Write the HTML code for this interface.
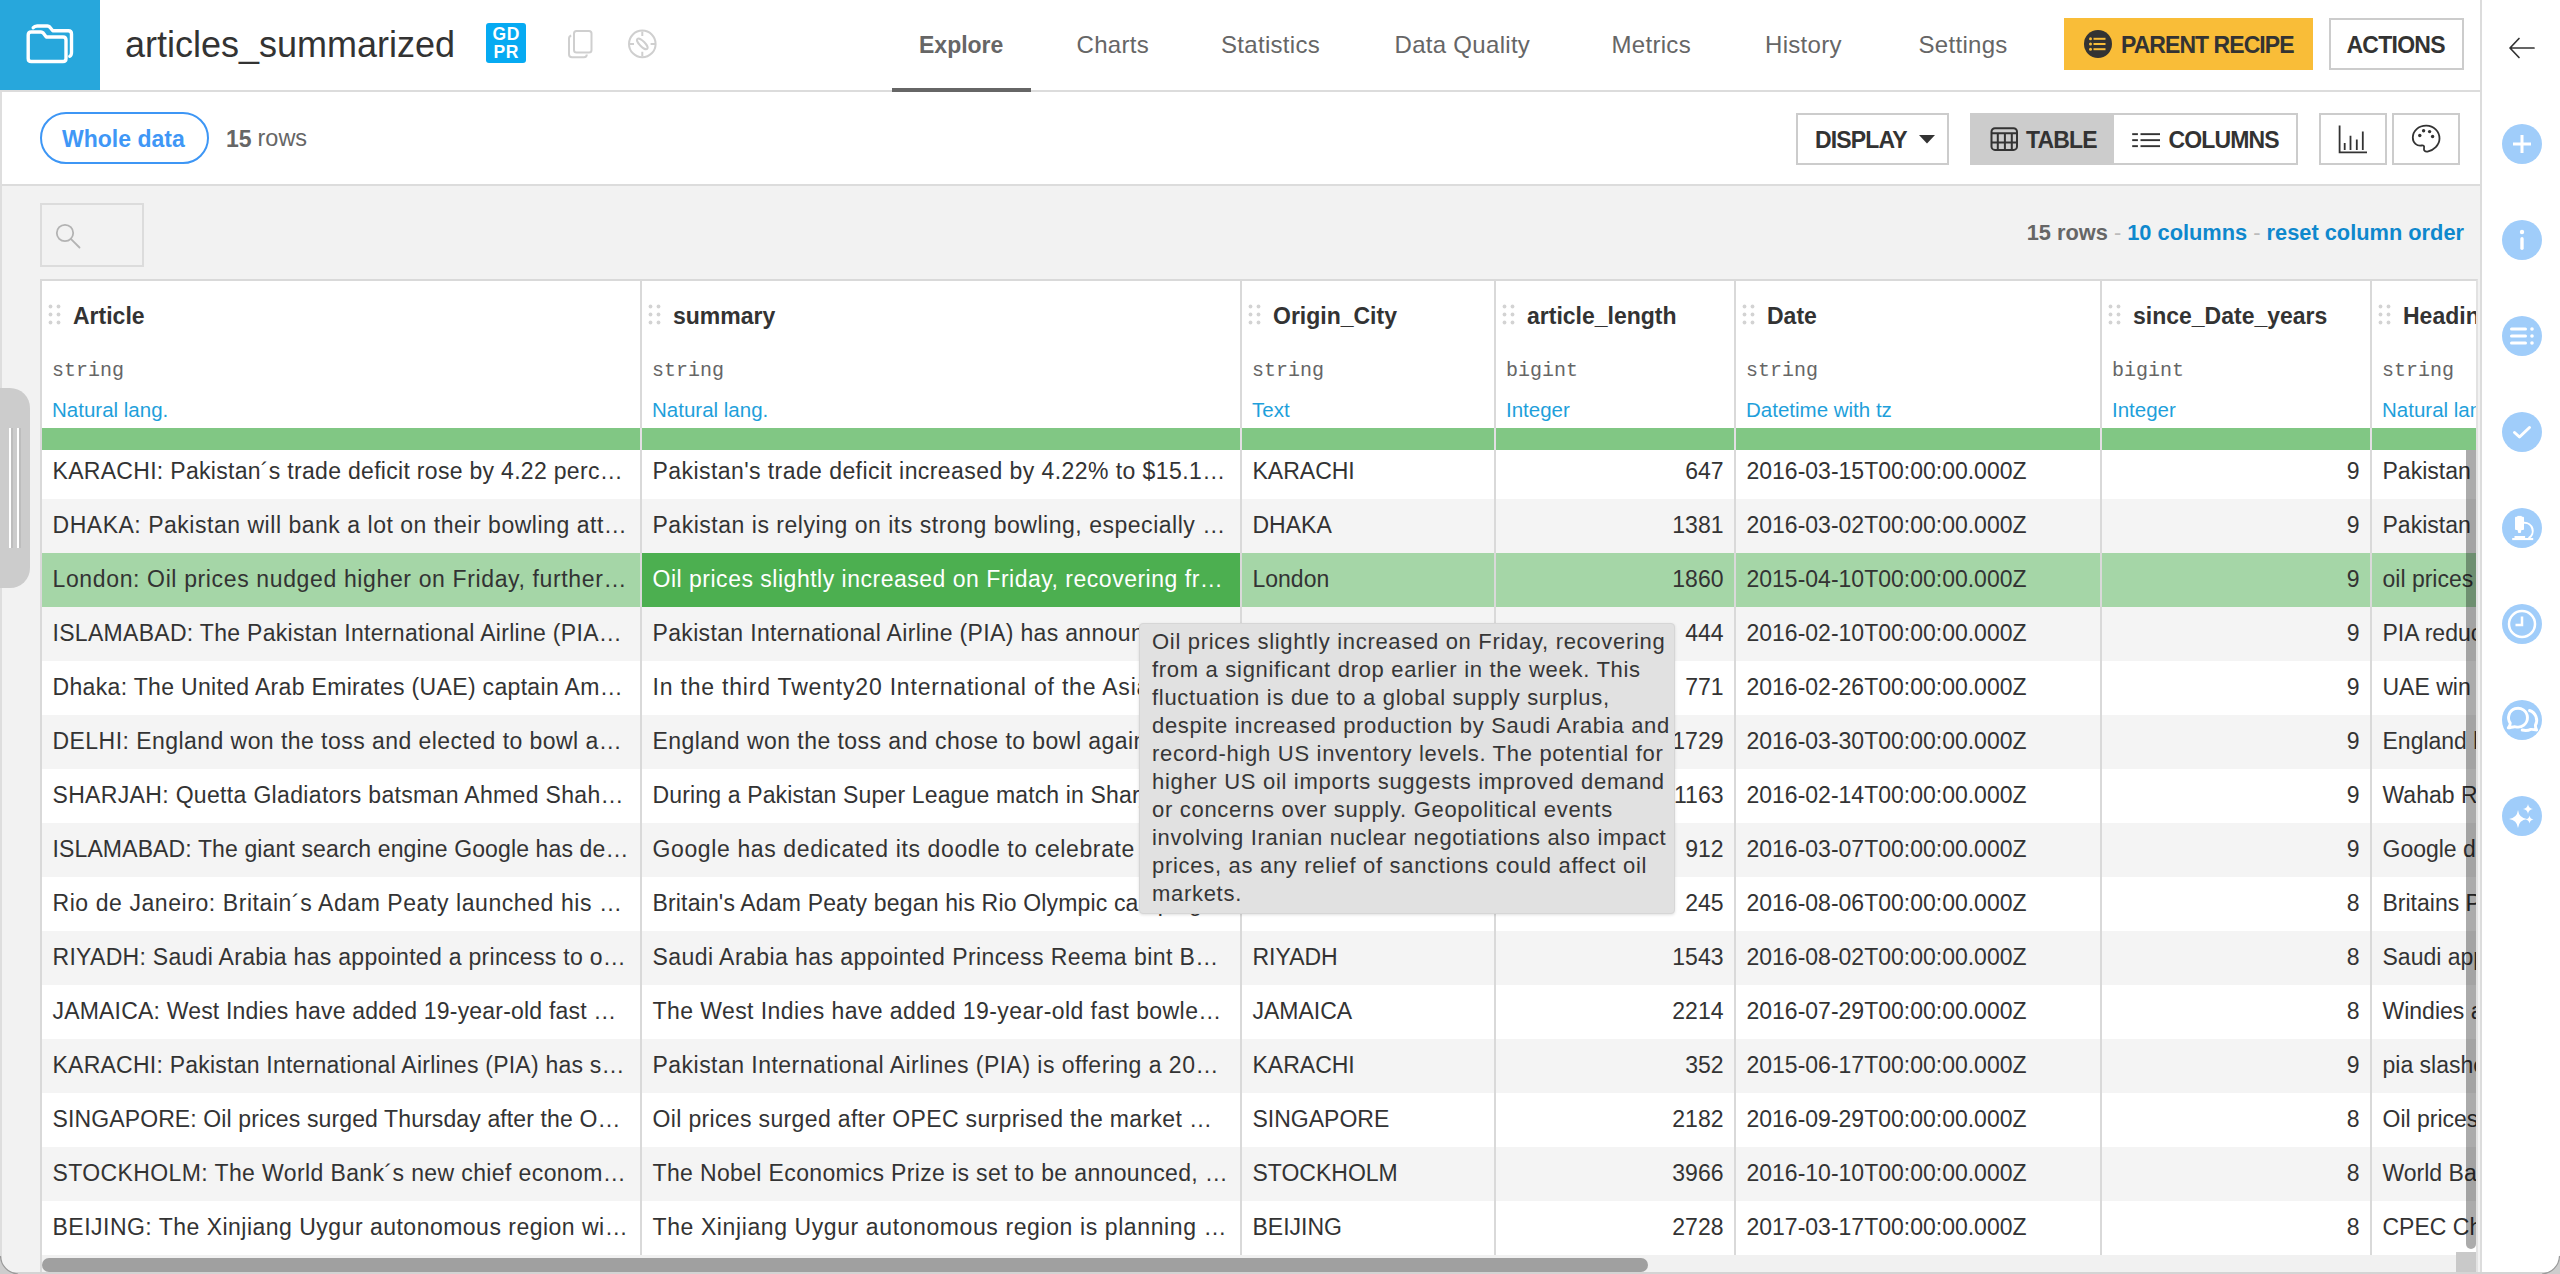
<!DOCTYPE html>
<html><head><meta charset="utf-8"><title>articles_summarized</title>
<style>
*{box-sizing:border-box;margin:0;padding:0}
html,body{width:2560px;height:1274px;overflow:hidden;background:#fff}
body{position:relative;font-family:"Liberation Sans",sans-serif;color:#333}
.t{position:absolute;white-space:nowrap}
.abs{position:absolute}
.btn{position:absolute;border:2px solid #cccccc;background:#fff}
.mono{font-family:"Liberation Mono",monospace}
</style></head><body>
<div class="abs" style="left:0;top:0;width:100px;height:90px;background:#27a7dc"></div>
<svg class="abs" style="left:0;top:0" width="100" height="90" viewBox="0 0 100 90" fill="none" stroke="#fff" stroke-width="3.4" stroke-linejoin="round" stroke-linecap="round">
<path d="M33.2 27.8 Q34.5 26 37.2 26 H47.5 Q48.8 26 49.7 27 L52.8 30.8 H68.3 Q71.5 30.8 71.5 34 V52.3 Q71.5 55.6 69.8 56.3"/>
<path d="M28.2 35 Q28.2 32 31.2 32 H41 Q42.3 32 43.2 33 L46.3 37 H63 Q66 37 66 40 V58.5 Q66 61.5 63 61.5 H31.2 Q28.2 61.5 28.2 58.5 Z"/>
</svg>
<div class="t" style="top:26.53px;font-size:36px;line-height:36px;font-weight:400;color:#333;left:125px;">articles_summarized</div>
<div class="abs" style="left:486px;top:23px;width:40px;height:40px;background:#06aaf2;border-radius:3px"></div>
<div class="t" style="left:486px;width:40px;text-align:center;top:26.49px;font-size:17.5px;line-height:17.5px;font-weight:700;color:#fff;letter-spacing:0.6px;text-indent:0.6px">GD</div>
<div class="t" style="left:486px;width:40px;text-align:center;top:43.99px;font-size:17.5px;line-height:17.5px;font-weight:700;color:#fff;letter-spacing:0.6px;text-indent:0.6px">PR</div>
<svg class="abs" style="left:560px;top:24px" width="40" height="40" viewBox="0 0 40 40" fill="none" stroke="#cfcfcf" stroke-width="2">
<rect x="14" y="7" width="17.5" height="21.5" rx="2.5"/>
<path d="M11.2 11.5 Q9 12.3 9 14.8 V30.3 Q9 33.2 12 33.2 H24 Q26.8 33.2 26.8 30.5"/>
</svg>
<svg class="abs" style="left:622px;top:24px" width="40" height="40" viewBox="0 0 40 40" fill="none" stroke="#cfcfcf" stroke-width="2">
<circle cx="20.3" cy="19.9" r="13.3"/>
<path d="M20.3 7.5 V12 M20.3 27.8 V32.3 M7.6 19.9 H12 M28.6 19.9 H33"/>
<ellipse cx="20.3" cy="19.9" rx="7" ry="2.6" transform="rotate(45 20.3 19.9)"/>
</svg>
<div class="t" style="top:33.53px;font-size:23px;line-height:23px;font-weight:700;color:#666;left:919px;">Explore</div>
<div class="t" style="top:32.68px;font-size:24px;line-height:24px;font-weight:400;color:#666;left:1076.5px;letter-spacing:0.3px;">Charts</div>
<div class="t" style="top:32.68px;font-size:24px;line-height:24px;font-weight:400;color:#666;left:1221px;letter-spacing:0.3px;">Statistics</div>
<div class="t" style="top:32.68px;font-size:24px;line-height:24px;font-weight:400;color:#666;left:1394.5px;letter-spacing:0.3px;">Data Quality</div>
<div class="t" style="top:32.68px;font-size:24px;line-height:24px;font-weight:400;color:#666;left:1611.5px;letter-spacing:0.3px;">Metrics</div>
<div class="t" style="top:32.68px;font-size:24px;line-height:24px;font-weight:400;color:#666;left:1765px;letter-spacing:0.3px;">History</div>
<div class="t" style="top:32.68px;font-size:24px;line-height:24px;font-weight:400;color:#666;left:1918.5px;letter-spacing:0.3px;">Settings</div>
<div class="abs" style="left:2064px;top:18px;width:249px;height:52px;background:#f9bd38"></div>
<svg class="abs" style="left:2084px;top:30px" width="28" height="28" viewBox="0 0 28 28">
<circle cx="14" cy="14" r="14" fill="#333"/>
<g fill="#f9bd38"><circle cx="6.5" cy="8.8" r="1.5"/><circle cx="6.5" cy="14" r="1.5"/><circle cx="6.5" cy="19.2" r="1.5"/>
<rect x="9.5" y="7.8" width="12" height="2"/><rect x="9.5" y="13" width="12" height="2"/><rect x="9.5" y="18.2" width="12" height="2"/></g>
</svg>
<div class="t" style="top:33.73px;font-size:23px;line-height:23px;font-weight:700;color:#333;left:2121px;letter-spacing:-0.95px;">PARENT RECIPE</div>
<div class="btn" style="left:2329px;top:18px;width:135px;height:52px"></div>
<div class="t" style="top:34.13px;font-size:23px;line-height:23px;font-weight:700;color:#333;left:2346.5px;letter-spacing:-0.75px;">ACTIONS</div>
<div class="abs" style="left:0;top:90px;width:2480px;height:2px;background:#dcdcdc"></div>
<div class="abs" style="left:892px;top:88px;width:139px;height:4px;background:#666"></div>
<div class="abs" style="left:0;top:184px;width:2480px;height:2px;background:#dcdcdc"></div>
<div class="abs" style="left:40px;top:112px;width:169px;height:52px;border:2px solid #3d96f5;border-radius:26px"></div>
<div class="t" style="top:127.53px;font-size:23px;line-height:23px;font-weight:700;color:#3f97f6;left:62px;">Whole data</div>
<div class="t" style="top:127.53px;font-size:23px;line-height:23px;font-weight:700;color:#666;left:226px;">15</div>
<div class="t" style="top:127.11px;font-size:23.5px;line-height:23.5px;font-weight:400;color:#666;left:257.5px;">rows</div>
<div class="btn" style="left:1796px;top:113px;width:153px;height:52px"></div>
<div class="t" style="top:129.13px;font-size:23px;line-height:23px;font-weight:700;color:#333;left:1815px;letter-spacing:-0.85px;">DISPLAY</div>
<svg class="abs" style="left:1918px;top:134px" width="18" height="10" viewBox="0 0 18 10"><path d="M1 1 H17 L9 9.5 Z" fill="#333"/></svg>
<div class="btn" style="left:1970px;top:113px;width:328px;height:52px"></div>
<div class="abs" style="left:1970px;top:113px;width:144px;height:52px;background:#cccccc"></div>
<svg class="abs" style="left:1988px;top:125px" width="32" height="28" viewBox="0 0 32 28" fill="none" stroke="#333" stroke-width="2">
<rect x="3.5" y="3.3" width="25.5" height="21.6" rx="3.5"/>
<path d="M3.5 8.3 H29 M3.5 17.6 H29 M9.8 8.3 V25 M16.9 8.3 V25 M23.8 8.3 V25"/>
</svg>
<div class="t" style="top:129.13px;font-size:23px;line-height:23px;font-weight:700;color:#333;left:2026px;letter-spacing:-0.85px;">TABLE</div>
<svg class="abs" style="left:2130px;top:130px" width="32" height="20" viewBox="0 0 32 20" fill="#333">
<rect x="2.2" y="3.2" width="5.7" height="1.9"/><rect x="10.5" y="3.2" width="19.5" height="1.9"/>
<rect x="2.2" y="9.2" width="5.7" height="1.9"/><rect x="10.5" y="9.2" width="19.5" height="1.9"/>
<rect x="2.2" y="15.2" width="5.7" height="1.9"/><rect x="10.5" y="15.2" width="19.5" height="1.9"/>
</svg>
<div class="t" style="top:129.13px;font-size:23px;line-height:23px;font-weight:700;color:#333;left:2168.5px;letter-spacing:-0.85px;">COLUMNS</div>
<div class="btn" style="left:2319px;top:113px;width:68px;height:52px"></div>
<svg class="abs" style="left:2319px;top:113px" width="68" height="52" viewBox="0 0 68 52" fill="none" stroke="#333" stroke-width="1.8">
<path d="M20.6 12.5 V39.3 H48"/>
<path d="M25.7 30 V37 M31.5 22.8 V37 M37.8 26.4 V37 M43.8 18.5 V37"/>
</svg>
<div class="btn" style="left:2392px;top:113px;width:68px;height:52px"></div>
<svg class="abs" style="left:2392px;top:113px" width="68" height="52" viewBox="0 0 68 52" fill="none" stroke="#333" stroke-width="1.8">
<path d="M34.5 12.6 C26.5 12.4 20.8 18 20.8 24.6 C20.8 30 25 33.3 29.5 32.5 C31.6 32.1 32.5 33.2 32 35.3 C31.6 37.5 33 39 35.5 38.6 C41.5 37.5 47.5 32 47.5 25.5 C47.5 18.5 41.5 12.7 34.5 12.6 Z"/>
<g fill="#333" stroke="none"><circle cx="27.8" cy="22.5" r="1.7"/><circle cx="31.6" cy="17.8" r="1.7"/><circle cx="37.6" cy="18.6" r="1.7"/><circle cx="40.6" cy="23.5" r="1.7"/></g>
</svg>
<div class="abs" style="left:2480px;top:0;width:2px;height:1274px;background:#dcdcdc"></div>
<svg class="abs" style="left:2506px;top:32px" width="32" height="32" viewBox="0 0 32 32" fill="none" stroke="#333" stroke-width="1.7" stroke-linecap="round" stroke-linejoin="round"><path d="M4.5 16 H28 M13 6.5 L4 16 L13 25.5"/></svg>
<svg class="abs" style="left:2502px;top:124px" width="40" height="40" viewBox="0 0 40 40"><circle cx="20" cy="20" r="20" fill="#a0cdfa"/><path d="M20 11 V29 M11 20 H29" stroke="#fff" stroke-width="3"/></svg>
<svg class="abs" style="left:2502px;top:220px" width="40" height="40" viewBox="0 0 40 40"><circle cx="20" cy="20" r="20" fill="#a0cdfa"/><rect x="18.3" y="17" width="3.4" height="13" rx="1.7" fill="#fff"/><circle cx="20" cy="12" r="2.2" fill="#fff"/></svg>
<svg class="abs" style="left:2502px;top:316px" width="40" height="40" viewBox="0 0 40 40"><circle cx="20" cy="20" r="20" fill="#a0cdfa"/><g fill="#fff"><rect x="8" y="11.5" width="17" height="3" rx="1.5"/><rect x="8" y="18.5" width="17" height="3" rx="1.5"/><rect x="8" y="25.5" width="17" height="3" rx="1.5"/><circle cx="30" cy="13" r="1.8"/><circle cx="30" cy="20" r="1.8"/><circle cx="30" cy="27" r="1.8"/></g></svg>
<svg class="abs" style="left:2502px;top:412px" width="40" height="40" viewBox="0 0 40 40"><circle cx="20" cy="20" r="20" fill="#a0cdfa"/><path d="M12.5 20.5 L17.5 25 L27.5 15.5" stroke="#fff" stroke-width="3" fill="none" stroke-linecap="round" stroke-linejoin="round"/></svg>
<svg class="abs" style="left:2502px;top:508px" width="40" height="40" viewBox="0 0 40 40"><circle cx="20" cy="20" r="20" fill="#a0cdfa"/><g fill="#fff"><rect x="13" y="8.8" width="9" height="13.2" rx="1"/><rect x="15.3" y="7.9" width="4.4" height="2"/><path d="M15.4 21.5 L16.3 25 H18.7 L19.6 21.5 Z"/><rect x="10.2" y="30" width="21" height="2.1"/><rect x="12.5" y="28" width="10.6" height="2.5"/></g><path d="M22 14.8 A8.2 8.2 0 0 1 26.6 30.1" stroke="#fff" stroke-width="2.1" fill="none"/></svg>
<svg class="abs" style="left:2502px;top:604px" width="40" height="40" viewBox="0 0 40 40"><circle cx="20" cy="20" r="20" fill="#a0cdfa"/><circle cx="20" cy="20" r="13" stroke="#fff" stroke-width="2.5" fill="none"/><path d="M20 12.5 V21 H13.5" stroke="#fff" stroke-width="2.5" fill="none"/></svg>
<svg class="abs" style="left:2502px;top:700px" width="40" height="40" viewBox="0 0 40 40"><circle cx="20" cy="20" r="20" fill="#a0cdfa"/><path d="M8.26 23.1 A9.45 9.45 0 1 1 13.55 26.8 C11.5 26.3 9 27.6 6.3 27.9 C7.6 26.2 8.3 24.6 8.26 23.1 Z" stroke="#fff" stroke-width="2.9" fill="none" stroke-linejoin="round"/><path d="M27.5 10.5 A10.3 10.3 0 0 1 33.4 25.3 C33.3 26.9 34 28.6 34.6 30 C32.4 30 30.5 29.1 28.8 29.4 C26 30.6 23 30.7 20.2 30" stroke="#fff" stroke-width="2.9" fill="none" stroke-linejoin="round" stroke-linecap="round"/></svg>
<svg class="abs" style="left:2502px;top:796px" width="40" height="40" viewBox="0 0 40 40"><circle cx="20" cy="20" r="20" fill="#a0cdfa"/><g fill="#fff"><path d="M16 14 Q17 22 25 23 Q17 24 16 32 Q15 24 7 23 Q15 22 16 14 Z"/><path d="M26 8 Q26.6 12.4 31 13 Q26.6 13.6 26 18 Q25.4 13.6 21 13 Q25.4 12.4 26 8 Z"/><path d="M27.5 19.5 Q28 23 31.5 23.5 Q28 24 27.5 27.5 Q27 24 23.5 23.5 Q27 23 27.5 19.5 Z"/></g></svg>
<div class="abs" style="left:0;top:92px;width:2px;height:1182px;background:#dedede"></div>
<div class="abs" style="left:2px;top:186px;width:2478px;height:1086px;background:#f2f2f2"></div>
<div class="abs" style="left:40px;top:203px;width:104px;height:64px;border:2px solid #dcdcdc"></div>
<svg class="abs" style="left:50px;top:218px" width="36" height="36" viewBox="0 0 36 36" fill="none" stroke="#b3b3b3" stroke-width="1.8" stroke-linecap="round"><circle cx="15" cy="15" r="8.2"/><path d="M20.8 20.8 L29.5 29.5"/></svg>
<div class="t" style="right:96px;top:222.35px;font-size:21.8px;line-height:21.8px;font-weight:700;color:#666">15 rows <span style="color:#bbb;font-weight:400">-</span> <span style="color:#0f88cd">10 columns</span> <span style="color:#bbb;font-weight:400">-</span> <span style="color:#0f88cd">reset column order</span></div>
<div class="abs" style="left:0;top:388px;width:30px;height:200px;background:#cccccc;border-radius:0 20px 20px 0"></div>
<div class="abs" style="left:9px;top:428px;width:2px;height:120px;background:#fff"></div>
<div class="abs" style="left:11px;top:428px;width:2px;height:120px;background:#bdbdbd"></div>
<div class="abs" style="left:17px;top:428px;width:2px;height:120px;background:#fff"></div>
<div class="abs" style="left:19px;top:428px;width:2px;height:120px;background:#bdbdbd"></div>
<div class="abs" style="left:40px;top:279px;width:2438px;height:993px;background:#fff;border-top:2px solid #d9d9d9;border-left:2px solid #d9d9d9;border-right:2px solid #e2e2e2;overflow:hidden">
<div style="position:absolute;left:-42px;top:-281px;width:2560px;height:1274px">
<div class="abs" style="left:42px;top:445px;width:2440px;height:54px;background:#fff"></div>
<div class="abs" style="left:42px;top:499px;width:2440px;height:54px;background:#f4f4f4"></div>
<div class="abs" style="left:42px;top:553px;width:2440px;height:54px;background:#a5d6a7"></div>
<div class="abs" style="left:42px;top:607px;width:2440px;height:54px;background:#f4f4f4"></div>
<div class="abs" style="left:42px;top:661px;width:2440px;height:54px;background:#fff"></div>
<div class="abs" style="left:42px;top:715px;width:2440px;height:54px;background:#f4f4f4"></div>
<div class="abs" style="left:42px;top:769px;width:2440px;height:54px;background:#fff"></div>
<div class="abs" style="left:42px;top:823px;width:2440px;height:54px;background:#f4f4f4"></div>
<div class="abs" style="left:42px;top:877px;width:2440px;height:54px;background:#fff"></div>
<div class="abs" style="left:42px;top:931px;width:2440px;height:54px;background:#f4f4f4"></div>
<div class="abs" style="left:42px;top:985px;width:2440px;height:54px;background:#fff"></div>
<div class="abs" style="left:42px;top:1039px;width:2440px;height:54px;background:#f4f4f4"></div>
<div class="abs" style="left:42px;top:1093px;width:2440px;height:54px;background:#fff"></div>
<div class="abs" style="left:42px;top:1147px;width:2440px;height:54px;background:#f4f4f4"></div>
<div class="abs" style="left:42px;top:1201px;width:2440px;height:54px;background:#fff"></div>
<div class="abs" style="left:642px;top:553px;width:598px;height:54px;background:#4caf50"></div>
<div class="t" style="left:52.5px;top:459.93px;font-size:23px;line-height:23px;letter-spacing:0.302px;color:#333">KARACHI: Pakistan´s trade deficit rose by 4.22 perc…</div>
<div class="t" style="left:652.5px;top:459.93px;font-size:23px;line-height:23px;letter-spacing:0.432px;color:#333">Pakistan&#x27;s trade deficit increased by 4.22% to $15.1…</div>
<div class="t" style="left:1252.5px;top:459.93px;font-size:23px;line-height:23px;color:#333">KARACHI</div>
<div class="t" style="left:1496px;width:227.5px;text-align:right;top:459.93px;font-size:23px;line-height:23px;color:#333">647</div>
<div class="t" style="left:1746.5px;top:459.93px;font-size:23px;line-height:23px;color:#333">2016-03-15T00:00:00.000Z</div>
<div class="t" style="left:2102px;width:257.5px;text-align:right;top:459.93px;font-size:23px;line-height:23px;color:#333">9</div>
<div class="t" style="left:2382.5px;top:459.93px;font-size:23px;line-height:23px;color:#333">Pakistan trade</div>
<div class="t" style="left:52.5px;top:513.93px;font-size:23px;line-height:23px;letter-spacing:0.522px;color:#333">DHAKA: Pakistan will bank a lot on their bowling att…</div>
<div class="t" style="left:652.5px;top:513.93px;font-size:23px;line-height:23px;letter-spacing:0.522px;color:#333">Pakistan is relying on its strong bowling, especially …</div>
<div class="t" style="left:1252.5px;top:513.93px;font-size:23px;line-height:23px;color:#333">DHAKA</div>
<div class="t" style="left:1496px;width:227.5px;text-align:right;top:513.93px;font-size:23px;line-height:23px;color:#333">1381</div>
<div class="t" style="left:1746.5px;top:513.93px;font-size:23px;line-height:23px;color:#333">2016-03-02T00:00:00.000Z</div>
<div class="t" style="left:2102px;width:257.5px;text-align:right;top:513.93px;font-size:23px;line-height:23px;color:#333">9</div>
<div class="t" style="left:2382.5px;top:513.93px;font-size:23px;line-height:23px;color:#333">Pakistan will</div>
<div class="t" style="left:52.5px;top:567.93px;font-size:23px;line-height:23px;letter-spacing:0.634px;color:#333">London: Oil prices nudged higher on Friday, further…</div>
<div class="t" style="left:652.5px;top:567.93px;font-size:23px;line-height:23px;letter-spacing:0.509px;color:#fff">Oil prices slightly increased on Friday, recovering fr…</div>
<div class="t" style="left:1252.5px;top:567.93px;font-size:23px;line-height:23px;color:#333">London</div>
<div class="t" style="left:1496px;width:227.5px;text-align:right;top:567.93px;font-size:23px;line-height:23px;color:#333">1860</div>
<div class="t" style="left:1746.5px;top:567.93px;font-size:23px;line-height:23px;color:#333">2015-04-10T00:00:00.000Z</div>
<div class="t" style="left:2102px;width:257.5px;text-align:right;top:567.93px;font-size:23px;line-height:23px;color:#333">9</div>
<div class="t" style="left:2382.5px;top:567.93px;font-size:23px;line-height:23px;color:#333">oil prices</div>
<div class="t" style="left:52.5px;top:621.93px;font-size:23px;line-height:23px;letter-spacing:0.298px;color:#333">ISLAMABAD: The Pakistan International Airline (PIA…</div>
<div class="t" style="left:652.5px;top:621.93px;font-size:23px;line-height:23px;letter-spacing:0.338px;color:#333">Pakistan International Airline (PIA) has announced a…</div>
<div class="t" style="left:1252.5px;top:621.93px;font-size:23px;line-height:23px;color:#333">ISLAMABAD</div>
<div class="t" style="left:1496px;width:227.5px;text-align:right;top:621.93px;font-size:23px;line-height:23px;color:#333">444</div>
<div class="t" style="left:1746.5px;top:621.93px;font-size:23px;line-height:23px;color:#333">2016-02-10T00:00:00.000Z</div>
<div class="t" style="left:2102px;width:257.5px;text-align:right;top:621.93px;font-size:23px;line-height:23px;color:#333">9</div>
<div class="t" style="left:2382.5px;top:621.93px;font-size:23px;line-height:23px;color:#333">PIA reduces</div>
<div class="t" style="left:52.5px;top:675.93px;font-size:23px;line-height:23px;letter-spacing:0.329px;color:#333">Dhaka: The United Arab Emirates (UAE) captain Am…</div>
<div class="t" style="left:652.5px;top:675.93px;font-size:23px;line-height:23px;letter-spacing:0.804px;color:#333">In the third Twenty20 International of the Asia Cup…</div>
<div class="t" style="left:1252.5px;top:675.93px;font-size:23px;line-height:23px;color:#333">DHAKA</div>
<div class="t" style="left:1496px;width:227.5px;text-align:right;top:675.93px;font-size:23px;line-height:23px;color:#333">771</div>
<div class="t" style="left:1746.5px;top:675.93px;font-size:23px;line-height:23px;color:#333">2016-02-26T00:00:00.000Z</div>
<div class="t" style="left:2102px;width:257.5px;text-align:right;top:675.93px;font-size:23px;line-height:23px;color:#333">9</div>
<div class="t" style="left:2382.5px;top:675.93px;font-size:23px;line-height:23px;color:#333">UAE win</div>
<div class="t" style="left:52.5px;top:729.93px;font-size:23px;line-height:23px;letter-spacing:0.450px;color:#333">DELHI: England won the toss and elected to bowl a…</div>
<div class="t" style="left:652.5px;top:729.93px;font-size:23px;line-height:23px;letter-spacing:0.454px;color:#333">England won the toss and chose to bowl against Sri…</div>
<div class="t" style="left:1252.5px;top:729.93px;font-size:23px;line-height:23px;color:#333">DELHI</div>
<div class="t" style="left:1496px;width:227.5px;text-align:right;top:729.93px;font-size:23px;line-height:23px;color:#333">1729</div>
<div class="t" style="left:1746.5px;top:729.93px;font-size:23px;line-height:23px;color:#333">2016-03-30T00:00:00.000Z</div>
<div class="t" style="left:2102px;width:257.5px;text-align:right;top:729.93px;font-size:23px;line-height:23px;color:#333">9</div>
<div class="t" style="left:2382.5px;top:729.93px;font-size:23px;line-height:23px;color:#333">England beat</div>
<div class="t" style="left:52.5px;top:783.93px;font-size:23px;line-height:23px;letter-spacing:0.333px;color:#333">SHARJAH: Quetta Gladiators batsman Ahmed Shah…</div>
<div class="t" style="left:652.5px;top:783.93px;font-size:23px;line-height:23px;letter-spacing:0.148px;color:#333">During a Pakistan Super League match in Sharjah, Q…</div>
<div class="t" style="left:1252.5px;top:783.93px;font-size:23px;line-height:23px;color:#333">SHARJAH</div>
<div class="t" style="left:1496px;width:227.5px;text-align:right;top:783.93px;font-size:23px;line-height:23px;color:#333">1163</div>
<div class="t" style="left:1746.5px;top:783.93px;font-size:23px;line-height:23px;color:#333">2016-02-14T00:00:00.000Z</div>
<div class="t" style="left:2102px;width:257.5px;text-align:right;top:783.93px;font-size:23px;line-height:23px;color:#333">9</div>
<div class="t" style="left:2382.5px;top:783.93px;font-size:23px;line-height:23px;color:#333">Wahab Riaz</div>
<div class="t" style="left:52.5px;top:837.93px;font-size:23px;line-height:23px;letter-spacing:0.127px;color:#333">ISLAMABAD: The giant search engine Google has de…</div>
<div class="t" style="left:652.5px;top:837.93px;font-size:23px;line-height:23px;letter-spacing:0.620px;color:#333">Google has dedicated its doodle to celebrate the bi…</div>
<div class="t" style="left:1252.5px;top:837.93px;font-size:23px;line-height:23px;color:#333">ISLAMABAD</div>
<div class="t" style="left:1496px;width:227.5px;text-align:right;top:837.93px;font-size:23px;line-height:23px;color:#333">912</div>
<div class="t" style="left:1746.5px;top:837.93px;font-size:23px;line-height:23px;color:#333">2016-03-07T00:00:00.000Z</div>
<div class="t" style="left:2102px;width:257.5px;text-align:right;top:837.93px;font-size:23px;line-height:23px;color:#333">9</div>
<div class="t" style="left:2382.5px;top:837.93px;font-size:23px;line-height:23px;color:#333">Google doodle</div>
<div class="t" style="left:52.5px;top:891.93px;font-size:23px;line-height:23px;letter-spacing:0.574px;color:#333">Rio de Janeiro: Britain´s Adam Peaty launched his …</div>
<div class="t" style="left:652.5px;top:891.93px;font-size:23px;line-height:23px;letter-spacing:0.164px;color:#333">Britain&#x27;s Adam Peaty began his Rio Olympic campaig…</div>
<div class="t" style="left:1252.5px;top:891.93px;font-size:23px;line-height:23px;color:#333">Rio de Janeiro</div>
<div class="t" style="left:1496px;width:227.5px;text-align:right;top:891.93px;font-size:23px;line-height:23px;color:#333">245</div>
<div class="t" style="left:1746.5px;top:891.93px;font-size:23px;line-height:23px;color:#333">2016-08-06T00:00:00.000Z</div>
<div class="t" style="left:2102px;width:257.5px;text-align:right;top:891.93px;font-size:23px;line-height:23px;color:#333">8</div>
<div class="t" style="left:2382.5px;top:891.93px;font-size:23px;line-height:23px;color:#333">Britains Peaty</div>
<div class="t" style="left:52.5px;top:945.93px;font-size:23px;line-height:23px;letter-spacing:0.300px;color:#333">RIYADH: Saudi Arabia has appointed a princess to o…</div>
<div class="t" style="left:652.5px;top:945.93px;font-size:23px;line-height:23px;letter-spacing:0.442px;color:#333">Saudi Arabia has appointed Princess Reema bint B…</div>
<div class="t" style="left:1252.5px;top:945.93px;font-size:23px;line-height:23px;color:#333">RIYADH</div>
<div class="t" style="left:1496px;width:227.5px;text-align:right;top:945.93px;font-size:23px;line-height:23px;color:#333">1543</div>
<div class="t" style="left:1746.5px;top:945.93px;font-size:23px;line-height:23px;color:#333">2016-08-02T00:00:00.000Z</div>
<div class="t" style="left:2102px;width:257.5px;text-align:right;top:945.93px;font-size:23px;line-height:23px;color:#333">8</div>
<div class="t" style="left:2382.5px;top:945.93px;font-size:23px;line-height:23px;color:#333">Saudi appoints</div>
<div class="t" style="left:52.5px;top:999.93px;font-size:23px;line-height:23px;letter-spacing:0.192px;color:#333">JAMAICA: West Indies have added 19-year-old fast …</div>
<div class="t" style="left:652.5px;top:999.93px;font-size:23px;line-height:23px;letter-spacing:0.425px;color:#333">The West Indies have added 19-year-old fast bowle…</div>
<div class="t" style="left:1252.5px;top:999.93px;font-size:23px;line-height:23px;color:#333">JAMAICA</div>
<div class="t" style="left:1496px;width:227.5px;text-align:right;top:999.93px;font-size:23px;line-height:23px;color:#333">2214</div>
<div class="t" style="left:1746.5px;top:999.93px;font-size:23px;line-height:23px;color:#333">2016-07-29T00:00:00.000Z</div>
<div class="t" style="left:2102px;width:257.5px;text-align:right;top:999.93px;font-size:23px;line-height:23px;color:#333">8</div>
<div class="t" style="left:2382.5px;top:999.93px;font-size:23px;line-height:23px;color:#333">Windies add</div>
<div class="t" style="left:52.5px;top:1053.93px;font-size:23px;line-height:23px;letter-spacing:0.234px;color:#333">KARACHI: Pakistan International Airlines (PIA) has s…</div>
<div class="t" style="left:652.5px;top:1053.93px;font-size:23px;line-height:23px;letter-spacing:0.473px;color:#333">Pakistan International Airlines (PIA) is offering a 20…</div>
<div class="t" style="left:1252.5px;top:1053.93px;font-size:23px;line-height:23px;color:#333">KARACHI</div>
<div class="t" style="left:1496px;width:227.5px;text-align:right;top:1053.93px;font-size:23px;line-height:23px;color:#333">352</div>
<div class="t" style="left:1746.5px;top:1053.93px;font-size:23px;line-height:23px;color:#333">2015-06-17T00:00:00.000Z</div>
<div class="t" style="left:2102px;width:257.5px;text-align:right;top:1053.93px;font-size:23px;line-height:23px;color:#333">9</div>
<div class="t" style="left:2382.5px;top:1053.93px;font-size:23px;line-height:23px;color:#333">pia slashes</div>
<div class="t" style="left:52.5px;top:1107.93px;font-size:23px;line-height:23px;letter-spacing:0.120px;color:#333">SINGAPORE: Oil prices surged Thursday after the O…</div>
<div class="t" style="left:652.5px;top:1107.93px;font-size:23px;line-height:23px;letter-spacing:0.350px;color:#333">Oil prices surged after OPEC surprised the market …</div>
<div class="t" style="left:1252.5px;top:1107.93px;font-size:23px;line-height:23px;color:#333">SINGAPORE</div>
<div class="t" style="left:1496px;width:227.5px;text-align:right;top:1107.93px;font-size:23px;line-height:23px;color:#333">2182</div>
<div class="t" style="left:1746.5px;top:1107.93px;font-size:23px;line-height:23px;color:#333">2016-09-29T00:00:00.000Z</div>
<div class="t" style="left:2102px;width:257.5px;text-align:right;top:1107.93px;font-size:23px;line-height:23px;color:#333">8</div>
<div class="t" style="left:2382.5px;top:1107.93px;font-size:23px;line-height:23px;color:#333">Oil prices surge</div>
<div class="t" style="left:52.5px;top:1161.93px;font-size:23px;line-height:23px;letter-spacing:0.392px;color:#333">STOCKHOLM: The World Bank´s new chief econom…</div>
<div class="t" style="left:652.5px;top:1161.93px;font-size:23px;line-height:23px;letter-spacing:0.358px;color:#333">The Nobel Economics Prize is set to be announced, …</div>
<div class="t" style="left:1252.5px;top:1161.93px;font-size:23px;line-height:23px;color:#333">STOCKHOLM</div>
<div class="t" style="left:1496px;width:227.5px;text-align:right;top:1161.93px;font-size:23px;line-height:23px;color:#333">3966</div>
<div class="t" style="left:1746.5px;top:1161.93px;font-size:23px;line-height:23px;color:#333">2016-10-10T00:00:00.000Z</div>
<div class="t" style="left:2102px;width:257.5px;text-align:right;top:1161.93px;font-size:23px;line-height:23px;color:#333">8</div>
<div class="t" style="left:2382.5px;top:1161.93px;font-size:23px;line-height:23px;color:#333">World Bank</div>
<div class="t" style="left:52.5px;top:1215.93px;font-size:23px;line-height:23px;letter-spacing:0.486px;color:#333">BEIJING: The Xinjiang Uygur autonomous region wi…</div>
<div class="t" style="left:652.5px;top:1215.93px;font-size:23px;line-height:23px;letter-spacing:0.599px;color:#333">The Xinjiang Uygur autonomous region is planning …</div>
<div class="t" style="left:1252.5px;top:1215.93px;font-size:23px;line-height:23px;color:#333">BEIJING</div>
<div class="t" style="left:1496px;width:227.5px;text-align:right;top:1215.93px;font-size:23px;line-height:23px;color:#333">2728</div>
<div class="t" style="left:1746.5px;top:1215.93px;font-size:23px;line-height:23px;color:#333">2017-03-17T00:00:00.000Z</div>
<div class="t" style="left:2102px;width:257.5px;text-align:right;top:1215.93px;font-size:23px;line-height:23px;color:#333">8</div>
<div class="t" style="left:2382.5px;top:1215.93px;font-size:23px;line-height:23px;color:#333">CPEC China</div>
<div class="abs" style="left:42px;top:281px;width:2440px;height:147px;background:#fff"></div>
<div class="abs" style="left:42px;top:428px;width:2440px;height:22px;background:#81c784"></div>
<svg class="abs" style="left:48px;top:304px" width="14" height="22" viewBox="0 0 14 22" fill="#d3d3d3"><circle cx="2.5" cy="2.5" r="1.9"/><circle cx="2.5" cy="10.5" r="1.9"/><circle cx="2.5" cy="18.5" r="1.9"/><circle cx="10.5" cy="2.5" r="1.9"/><circle cx="10.5" cy="10.5" r="1.9"/><circle cx="10.5" cy="18.5" r="1.9"/></svg>
<div class="t" style="top:304.53px;font-size:23px;line-height:23px;font-weight:700;color:#333;left:73px;">Article</div>
<div class="t" style="top:361.47px;font-size:20px;line-height:20px;font-weight:400;color:#666;left:52px;font-family:'Liberation Mono',monospace;">string</div>
<div class="t" style="top:399.65px;font-size:20.5px;line-height:20.5px;font-weight:400;color:#1e9fdb;left:52px;">Natural lang.</div>
<svg class="abs" style="left:648px;top:304px" width="14" height="22" viewBox="0 0 14 22" fill="#d3d3d3"><circle cx="2.5" cy="2.5" r="1.9"/><circle cx="2.5" cy="10.5" r="1.9"/><circle cx="2.5" cy="18.5" r="1.9"/><circle cx="10.5" cy="2.5" r="1.9"/><circle cx="10.5" cy="10.5" r="1.9"/><circle cx="10.5" cy="18.5" r="1.9"/></svg>
<div class="t" style="top:304.53px;font-size:23px;line-height:23px;font-weight:700;color:#333;left:673px;">summary</div>
<div class="t" style="top:361.47px;font-size:20px;line-height:20px;font-weight:400;color:#666;left:652px;font-family:'Liberation Mono',monospace;">string</div>
<div class="t" style="top:399.65px;font-size:20.5px;line-height:20.5px;font-weight:400;color:#1e9fdb;left:652px;">Natural lang.</div>
<svg class="abs" style="left:1248px;top:304px" width="14" height="22" viewBox="0 0 14 22" fill="#d3d3d3"><circle cx="2.5" cy="2.5" r="1.9"/><circle cx="2.5" cy="10.5" r="1.9"/><circle cx="2.5" cy="18.5" r="1.9"/><circle cx="10.5" cy="2.5" r="1.9"/><circle cx="10.5" cy="10.5" r="1.9"/><circle cx="10.5" cy="18.5" r="1.9"/></svg>
<div class="t" style="top:304.53px;font-size:23px;line-height:23px;font-weight:700;color:#333;left:1273px;">Origin_City</div>
<div class="t" style="top:361.47px;font-size:20px;line-height:20px;font-weight:400;color:#666;left:1252px;font-family:'Liberation Mono',monospace;">string</div>
<div class="t" style="top:399.65px;font-size:20.5px;line-height:20.5px;font-weight:400;color:#1e9fdb;left:1252px;">Text</div>
<svg class="abs" style="left:1502px;top:304px" width="14" height="22" viewBox="0 0 14 22" fill="#d3d3d3"><circle cx="2.5" cy="2.5" r="1.9"/><circle cx="2.5" cy="10.5" r="1.9"/><circle cx="2.5" cy="18.5" r="1.9"/><circle cx="10.5" cy="2.5" r="1.9"/><circle cx="10.5" cy="10.5" r="1.9"/><circle cx="10.5" cy="18.5" r="1.9"/></svg>
<div class="t" style="top:304.53px;font-size:23px;line-height:23px;font-weight:700;color:#333;left:1527px;">article_length</div>
<div class="t" style="top:361.47px;font-size:20px;line-height:20px;font-weight:400;color:#666;left:1506px;font-family:'Liberation Mono',monospace;">bigint</div>
<div class="t" style="top:399.65px;font-size:20.5px;line-height:20.5px;font-weight:400;color:#1e9fdb;left:1506px;">Integer</div>
<svg class="abs" style="left:1742px;top:304px" width="14" height="22" viewBox="0 0 14 22" fill="#d3d3d3"><circle cx="2.5" cy="2.5" r="1.9"/><circle cx="2.5" cy="10.5" r="1.9"/><circle cx="2.5" cy="18.5" r="1.9"/><circle cx="10.5" cy="2.5" r="1.9"/><circle cx="10.5" cy="10.5" r="1.9"/><circle cx="10.5" cy="18.5" r="1.9"/></svg>
<div class="t" style="top:304.53px;font-size:23px;line-height:23px;font-weight:700;color:#333;left:1767px;">Date</div>
<div class="t" style="top:361.47px;font-size:20px;line-height:20px;font-weight:400;color:#666;left:1746px;font-family:'Liberation Mono',monospace;">string</div>
<div class="t" style="top:399.65px;font-size:20.5px;line-height:20.5px;font-weight:400;color:#1e9fdb;left:1746px;">Datetime with tz</div>
<svg class="abs" style="left:2108px;top:304px" width="14" height="22" viewBox="0 0 14 22" fill="#d3d3d3"><circle cx="2.5" cy="2.5" r="1.9"/><circle cx="2.5" cy="10.5" r="1.9"/><circle cx="2.5" cy="18.5" r="1.9"/><circle cx="10.5" cy="2.5" r="1.9"/><circle cx="10.5" cy="10.5" r="1.9"/><circle cx="10.5" cy="18.5" r="1.9"/></svg>
<div class="t" style="top:304.53px;font-size:23px;line-height:23px;font-weight:700;color:#333;left:2133px;">since_Date_years</div>
<div class="t" style="top:361.47px;font-size:20px;line-height:20px;font-weight:400;color:#666;left:2112px;font-family:'Liberation Mono',monospace;">bigint</div>
<div class="t" style="top:399.65px;font-size:20.5px;line-height:20.5px;font-weight:400;color:#1e9fdb;left:2112px;">Integer</div>
<svg class="abs" style="left:2378px;top:304px" width="14" height="22" viewBox="0 0 14 22" fill="#d3d3d3"><circle cx="2.5" cy="2.5" r="1.9"/><circle cx="2.5" cy="10.5" r="1.9"/><circle cx="2.5" cy="18.5" r="1.9"/><circle cx="10.5" cy="2.5" r="1.9"/><circle cx="10.5" cy="10.5" r="1.9"/><circle cx="10.5" cy="18.5" r="1.9"/></svg>
<div class="t" style="top:304.53px;font-size:23px;line-height:23px;font-weight:700;color:#333;left:2403px;">Heading</div>
<div class="t" style="top:361.47px;font-size:20px;line-height:20px;font-weight:400;color:#666;left:2382px;font-family:'Liberation Mono',monospace;">string</div>
<div class="t" style="top:399.65px;font-size:20.5px;line-height:20.5px;font-weight:400;color:#1e9fdb;left:2382px;">Natural lang.</div>
<div class="abs" style="left:640px;top:281px;width:2px;height:1000px;background:#d9d9d9"></div>
<div class="abs" style="left:640px;top:428px;width:2px;height:22px;background:#e3dfe3"></div>
<div class="abs" style="left:1240px;top:281px;width:2px;height:1000px;background:#d9d9d9"></div>
<div class="abs" style="left:1240px;top:428px;width:2px;height:22px;background:#e3dfe3"></div>
<div class="abs" style="left:1494px;top:281px;width:2px;height:1000px;background:#d9d9d9"></div>
<div class="abs" style="left:1494px;top:428px;width:2px;height:22px;background:#e3dfe3"></div>
<div class="abs" style="left:1734px;top:281px;width:2px;height:1000px;background:#d9d9d9"></div>
<div class="abs" style="left:1734px;top:428px;width:2px;height:22px;background:#e3dfe3"></div>
<div class="abs" style="left:2100px;top:281px;width:2px;height:1000px;background:#d9d9d9"></div>
<div class="abs" style="left:2100px;top:428px;width:2px;height:22px;background:#e3dfe3"></div>
<div class="abs" style="left:2370px;top:281px;width:2px;height:1000px;background:#d9d9d9"></div>
<div class="abs" style="left:2370px;top:428px;width:2px;height:22px;background:#e3dfe3"></div>
<div class="abs" style="left:2466px;top:450px;width:10px;height:799px;border-radius:0 0 5px 5px;background:rgba(0,0,0,0.33)"></div>
<div class="abs" style="left:42px;top:1255px;width:2434px;height:17px;background:#f1f1f1"></div>
<div class="abs" style="left:42px;top:1258px;width:1606px;height:14px;border-radius:7px;background:#a0a0a0"></div>
<div class="abs" style="left:2456px;top:1252px;width:20px;height:20px;background:#c9c9c9"></div>
</div></div>
<div class="abs" style="left:1139px;top:623px;width:536px;height:291px;background:#e1e1e1;border:1px solid #d6d6d6;border-radius:4px;box-shadow:0 1px 3px rgba(0,0,0,0.12)"></div>
<div class="t" style="top:631.38px;font-size:22px;line-height:22px;font-weight:400;color:#363636;left:1152px;letter-spacing:0.7px;">Oil prices slightly increased on Friday, recovering</div>
<div class="t" style="top:659.38px;font-size:22px;line-height:22px;font-weight:400;color:#363636;left:1152px;letter-spacing:0.7px;">from a significant drop earlier in the week. This</div>
<div class="t" style="top:687.38px;font-size:22px;line-height:22px;font-weight:400;color:#363636;left:1152px;letter-spacing:0.7px;">fluctuation is due to a global supply surplus,</div>
<div class="t" style="top:715.38px;font-size:22px;line-height:22px;font-weight:400;color:#363636;left:1152px;letter-spacing:0.7px;">despite increased production by Saudi Arabia and</div>
<div class="t" style="top:743.38px;font-size:22px;line-height:22px;font-weight:400;color:#363636;left:1152px;letter-spacing:0.7px;">record-high US inventory levels. The potential for</div>
<div class="t" style="top:771.38px;font-size:22px;line-height:22px;font-weight:400;color:#363636;left:1152px;letter-spacing:0.7px;">higher US oil imports suggests improved demand</div>
<div class="t" style="top:799.38px;font-size:22px;line-height:22px;font-weight:400;color:#363636;left:1152px;letter-spacing:0.7px;">or concerns over supply. Geopolitical events</div>
<div class="t" style="top:827.38px;font-size:22px;line-height:22px;font-weight:400;color:#363636;left:1152px;letter-spacing:0.7px;">involving Iranian nuclear negotiations also impact</div>
<div class="t" style="top:855.38px;font-size:22px;line-height:22px;font-weight:400;color:#363636;left:1152px;letter-spacing:0.7px;">prices, as any relief of sanctions could affect oil</div>
<div class="t" style="top:883.38px;font-size:22px;line-height:22px;font-weight:400;color:#363636;left:1152px;letter-spacing:0.7px;">markets.</div>
<div class="abs" style="left:0;top:1272px;width:2560px;height:2px;background:#d4d4d4"></div>
<svg class="abs" style="left:0;top:1254px" width="20" height="20" viewBox="0 0 20 20"><path d="M0 0 V20 H20 A20 20 0 0 1 0 0 Z" fill="#cdcdcd"/><path d="M0.5 2 A18.5 18.5 0 0 0 18 20" stroke="#9a9a9a" stroke-width="1.2" fill="none"/></svg>
<svg class="abs" style="left:2540px;top:1254px" width="20" height="20" viewBox="0 0 20 20"><path d="M20 0 V20 H0 A20 20 0 0 0 20 0 Z" fill="#cdcdcd"/><path d="M19.5 2 A18.5 18.5 0 0 1 2 20" stroke="#9a9a9a" stroke-width="1.2" fill="none"/></svg>
</body></html>
